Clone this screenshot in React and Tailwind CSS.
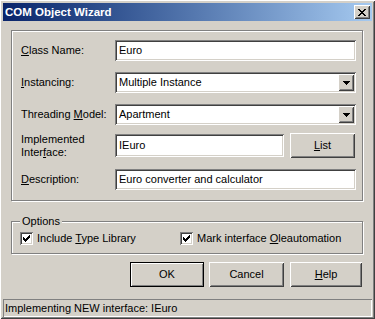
const sunken =
  'shadow-[inset_1px_1px_0_#808080,inset_-1px_-1px_0_#ffffff,inset_2px_2px_0_#404040,inset_-2px_-2px_0_#d4d0c8]';
const raised =
  'shadow-[inset_1px_1px_0_#ffffff,inset_-1px_-1px_0_#404040,inset_2px_2px_0_#d4d0c8,inset_-2px_-2px_0_#808080]';

const U = ({ children }) => <span className="underline underline-offset-[1px]">{children}</span>;

const Field = ({ children, className = '' }) => (
    <div className={`h-[21px] bg-white pl-[4px] flex items-center whitespace-nowrap ${sunken} ${className}`}>
        {children}
    </div>
);

const DropButton = () => (
    <div className={`ml-auto mr-[2px] w-[16px] h-[17px] bg-[#d4d0c8] flex items-center justify-center ${raised}`}>
        <svg width="7" height="4" viewBox="0 0 7 4" shapeRendering="crispEdges">
            <rect x="0" y="0" width="7" height="1" fill="#000" />
            <rect x="1" y="1" width="5" height="1" fill="#000" />
            <rect x="2" y="2" width="3" height="1" fill="#000" />
            <rect x="3" y="3" width="1" height="1" fill="#000" />
        </svg>
    </div>
);

const Select = ({ value }) => (
    <Field className="flex-1">
        <span>{value}</span>
        <DropButton />
    </Field>
);

const CheckBox = () => (
    <div className={`w-[13px] h-[13px] bg-white shrink-0 flex items-center justify-center ${sunken}`}>
        <svg width="7" height="7" viewBox="0 0 7 7" shapeRendering="crispEdges">
            <rect x="0" y="2" width="1" height="3" fill="#000" />
            <rect x="1" y="3" width="1" height="3" fill="#000" />
            <rect x="2" y="4" width="1" height="3" fill="#000" />
            <rect x="3" y="3" width="1" height="3" fill="#000" />
            <rect x="4" y="2" width="1" height="3" fill="#000" />
            <rect x="5" y="1" width="1" height="3" fill="#000" />
            <rect x="6" y="0" width="1" height="3" fill="#000" />
        </svg>
    </div>
);

const Button = ({ children, isDefault, className = '' }) => (
    <div
        className={`h-[25px] flex items-center justify-center bg-[#d4d0c8] ${
            isDefault
                ? 'border border-black shadow-[inset_1px_1px_0_#ffffff,inset_-1px_-1px_0_#808080]'
                : raised
        } ${className}`}
    >
        {children}
    </div>
);

export default function App() {
    return (
        <div className='w-[375px] h-[319px] bg-[#d4d0c8] text-black text-[11px] leading-[13px] font-["Liberation_Sans",Arial,sans-serif] flex flex-col pt-[3px] px-[3px] pb-[2px] shadow-[inset_1px_1px_0_#ffffff,inset_-1px_-1px_0_#404040,inset_2px_2px_0_#d4d0c8,inset_-2px_-2px_0_#808080] overflow-hidden'>
            {/* Title bar */}
            <div className="h-[18px] flex items-center bg-gradient-to-r from-[#0a246a] to-[#a6caf0] pl-[2px] pr-[2px]">
                <span className="text-white font-bold text-[11.5px]">COM Object Wizard</span>
                <div className={`ml-auto w-[16px] h-[14px] bg-[#d4d0c8] flex items-center justify-center ${raised}`}>
                    <svg width="8" height="7" viewBox="0 0 8 7" shapeRendering="crispEdges">
                        <rect x="0" y="0" width="2" height="1" fill="#000" />
                        <rect x="6" y="0" width="2" height="1" fill="#000" />
                        <rect x="1" y="1" width="2" height="1" fill="#000" />
                        <rect x="5" y="1" width="2" height="1" fill="#000" />
                        <rect x="2" y="2" width="4" height="1" fill="#000" />
                        <rect x="3" y="3" width="2" height="1" fill="#000" />
                        <rect x="2" y="4" width="4" height="1" fill="#000" />
                        <rect x="1" y="5" width="2" height="1" fill="#000" />
                        <rect x="5" y="5" width="2" height="1" fill="#000" />
                        <rect x="0" y="6" width="2" height="1" fill="#000" />
                        <rect x="6" y="6" width="2" height="1" fill="#000" />
                    </svg>
                </div>
            </div>

            {/* Main group */}
            <div className="mt-[9px] ml-[8px] mr-[9px] border border-[#808080] shadow-[inset_1px_1px_0_#ffffff,1px_1px_0_#ffffff] pt-[9px] pb-[10px] pl-[9px] pr-[6px] flex flex-col">
                <div className="flex items-center h-[21px]">
                    <div className="w-[94px] shrink-0"><U>C</U>lass Name:</div>
                    <Field className="flex-1">Euro</Field>
                </div>
                <div className="flex items-center h-[21px] mt-[11px]">
                    <div className="w-[94px] shrink-0"><U>I</U>nstancing:</div>
                    <Select value="Multiple Instance" />
                </div>
                <div className="flex items-center h-[21px] mt-[11px]">
                    <div className="w-[94px] shrink-0">Threading <U>M</U>odel:</div>
                    <Select value="Apartment" />
                </div>
                <div className="flex items-center h-[25px] mt-[8px]">
                    <div className="w-[94px] shrink-0 leading-[13px]">
                        Implemented<br />Inter<U>f</U>ace:
                    </div>
                    <Field className="flex-1 h-[23px]">IEuro</Field>
                    <Button className="w-[65px] ml-[6px] mr-[1px]"><U>L</U>ist</Button>
                </div>
                <div className="flex items-center h-[21px] mt-[11px]">
                    <div className="w-[94px] shrink-0"><U>D</U>escription:</div>
                    <Field className="flex-1">Euro converter and calculator</Field>
                </div>
            </div>

            {/* Options group */}
            <div className="relative mt-[20px] ml-[8px] mr-[9px] h-[33px] border border-[#808080] shadow-[inset_1px_1px_0_#ffffff,1px_1px_0_#ffffff] pt-[10px] pl-[8px] flex items-start">
                <span className="absolute left-[8px] top-[-7px] px-[2px] bg-[#d4d0c8]">Options</span>
                <div className="w-[160px] flex items-center">
                    <CheckBox />
                    <span className="ml-[4px]">Include <U>T</U>ype Library</span>
                </div>
                <div className="flex items-center">
                    <CheckBox />
                    <span className="ml-[4px]">Mark interface <U>O</U>leautomation</span>
                </div>
            </div>

            {/* Buttons */}
            <div className="mt-[8px] flex justify-end pr-[10px]">
                <Button isDefault className="w-[74px]">OK</Button>
                <Button className="w-[75px] ml-[5px]">Cancel</Button>
                <Button className="w-[72px] ml-[6px]"><U>H</U>elp</Button>
            </div>

            {/* Status bar */}
            <div className="mt-auto h-[18px] flex items-center pl-[2px] shadow-[inset_1px_1px_0_#808080,inset_-1px_-1px_0_#ffffff]">
                Implementing NEW interface: IEuro
            </div>
        </div>
    );
}
